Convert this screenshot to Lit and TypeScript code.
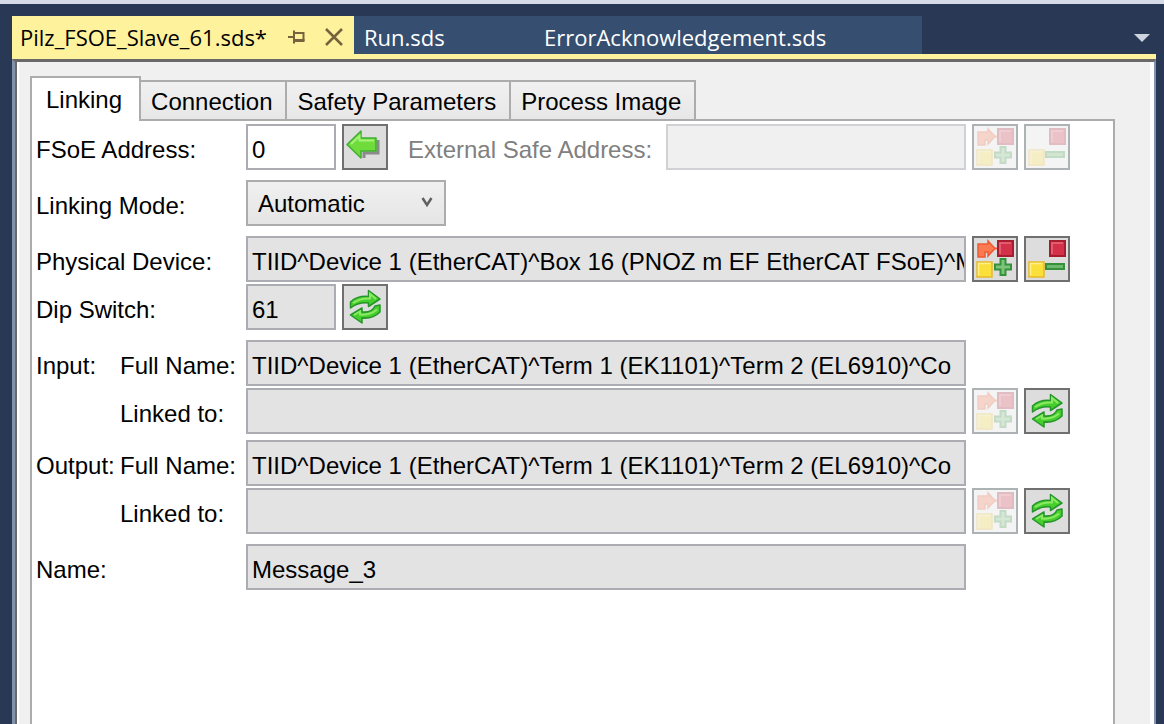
import { LitElement, html, css, svg, nothing } from "lit";
import { customElement, property, state } from "lit/decorators.js";

type IconName = "link" | "unlink" | "back" | "refresh";

const redSquare = svg`<rect x="26" y="5" width="15" height="15" fill="#d3304a" stroke="#a81c30" stroke-width="2"/><path d="M28 18V7h11" fill="none" stroke="#e76a7c" stroke-width="1.5"/>`;
const yellowSquare = svg`<rect x="5" y="26" width="15" height="15" fill="#fbe03c" stroke="#e8b928" stroke-width="1.5"/><path d="M6.500 39.500V27.500h12" fill="none" stroke="#fff08a" stroke-width="1.500"/>`;

const icons = {
  link: svg`
    <path d="M20 12.500h6" stroke="#f0623c" stroke-width="2"/>
    <path d="M6 21V8h10V5l7 7.500-7 7.500v-4h-3v5z" fill="#fb7a50" stroke="#ee5a34" stroke-width="1.5"/>
    ${redSquare}${yellowSquare}
    <path d="M28.500 23h5v5.500H39v5h-5.500V39h-5v-5.500H23v-5h5.500z" fill="#7cc47a" stroke="#36913c" stroke-width="2"/>`,
  unlink: svg`
    ${redSquare}${yellowSquare}
    <rect x="22" y="28" width="18" height="5" fill="#6fb96e" stroke="#36913c" stroke-width="2"/>`,
  back: svg`
    <path d="M36 16v13H22v5" fill="none" stroke="#777777" stroke-width="3" opacity="0.8"/>
    <path d="M5 20.500 19 7v7h15v13H19v7z" fill="#6fdc3c" stroke="#3fae30" stroke-width="1.500" stroke-linejoin="round"/>
    <path d="M9 20 17.500 12v4.500H32" fill="none" stroke="#a6f27c" stroke-width="2"/>`,
  refresh: svg`
    <path d="M8.500 24v-6q7-6.500 18-5.500V6.500l11.500 8.500-11.500 7.500V19q-10-1-18 5z" fill="#46cf2c" stroke="#25952a" stroke-width="1.5" stroke-linejoin="round"/>
    <path d="M11 19q7-5 17-4.500V10l6 5" fill="none" stroke="#8be966" stroke-width="2"/>
    <path d="M38 21v7q-7 7-18 6v5L8.500 31 20 24v4q10 1 13-6z" fill="#46cf2c" stroke="#25952a" stroke-width="1.5" stroke-linejoin="round"/>
    <path d="M12 31l6-3.500v3q10 1 17-5" fill="none" stroke="#8be966" stroke-width="2"/>`,
};

@customElement("icon-button")
class IconButton extends LitElement {
  @property() icon: IconName = "link";
  @property() label = "";
  @property({ type: Boolean }) disabled = false;

  static styles = css`
    :host { display: block; flex: none; }
    button {
      display: block;
      box-sizing: border-box;
      width: 46px;
      height: 46px;
      padding: 0;
      border: 2px solid #707070;
      background: #dddddd;
    }
    button:disabled { border-color: #adb2b5; background: #f4f4f4; }
    button:disabled svg { opacity: 0.25; }
    svg { display: block; width: 42px; height: 42px; }
  `;

  render() {
    return html`<button type="button" aria-label=${this.label} ?disabled=${this.disabled}>
      <svg viewBox="2 2 42 42" aria-hidden="true">${icons[this.icon]}</svg>
    </button>`;
  }
}

@customElement("app-root")
class AppRoot extends LitElement {
  @state() private activeTab = "Linking";

  static styles = css`
    :host {
      display: flex;
      flex-direction: column;
      box-sizing: border-box;
      height: 100vh;
      overflow: hidden;
      padding: 0 8px 0 12px;
      border-top: 4px solid #d6dce7;
      background: #293955;
      color: #000000;
      font: 24px/28px "Liberation Sans", Arial, sans-serif;
    }
    * { box-sizing: border-box; }
    button, input, select { font: inherit; color: inherit; margin: 0; border-radius: 0; }

    .documents {
      display: flex;
      flex: none;
      height: 55px;
      padding-top: 12px;
      border-bottom: 5px solid #fff29d;
      color: #ffffff;
      font: 22px/34px "Open Sans", "Noto Sans", sans-serif;
    }
    .document { display: flex; align-items: center; background: #364e6f; padding: 4px 10px 0; }
    .document.active { width: 342px; background: #fff29d; color: #000000; padding-left: 8px; gap: 18px; }
    .document.run { width: 180px; }
    .document.ack { width: 388px; }
    .document button { border: 0; padding: 0; background: none; white-space: nowrap; }
    .document .name { flex: 1; text-align: left; }
    .documents svg { display: block; }
    .more { margin-left: auto; border: 0; padding: 6px 6px 0 0; background: none; }

    .frame {
      flex: 1;
      display: flex;
      flex-direction: column;
      min-height: 0;
      padding: 14px 39px 0 15px;
      border-style: solid;
      border-width: 3px 2px 0 3px;
      border-color: #696969 #8391b0 #696969 #8391a8;
      box-shadow: inset 2px 0 #696969, inset 4px 0 #ffffff, inset -4px 0 #ffffff;
      background: #f0f0f0;
    }
    .tabs { display: flex; align-items: flex-end; flex: none; }
    .tab {
      height: 39px;
      padding: 2px 13px 0 10px;
      border: 2px solid #acacac;
      border-left-width: 0;
      border-bottom: 0;
      background: linear-gradient(#f1f1f1, #e7e7e7);
      white-space: nowrap;
    }
    .tab.active {
      height: 45px;
      padding: 0 17px 0 14px;
      margin-bottom: -2px;
      border-left-width: 2px;
      background: #ffffff;
      z-index: 1;
    }
    .pane {
      flex: 1;
      display: flex;
      flex-direction: column;
      gap: 10px;
      padding: 3px 43px 0 4px;
      border: 2px solid #acacac;
      border-bottom: 0;
      background: #ffffff;
    }

    .group { display: flex; flex-direction: column; gap: 2px; }
    .pair { display: flex; flex-direction: column; gap: 6px; }
    .row { display: grid; grid-template-columns: 84px 126px minmax(0, 1fr) 104px; }
    .row > label { white-space: nowrap; padding-top: 12px; }
    .wide { grid-column: 1 / 3; }
    .sub { grid-column: 2; }
    .controls { grid-column: 3; display: flex; gap: 6px; }
    .actions { grid-column: 4; display: flex; gap: 6px; padding-left: 6px; }
    input {
      flex: 1;
      min-width: 0;
      height: 46px;
      padding: 6px 0 0 4px;
      border: 2px solid #abadb3;
      background: #ffffff;
      outline: none;
    }
    input:read-only { background: #e3e3e3; }
    input:disabled { background: #f0f0f0; border-color: #d0d1d4; }
    input.short { flex: none; width: 90px; }
    .external { color: #808080; padding: 12px 8px 0 14px; white-space: nowrap; }
    .select { position: relative; width: 200px; height: 46px; }
    select {
      width: 100%;
      height: 100%;
      appearance: none;
      padding: 2px 30px 0 10px;
      border: 2px solid #acacac;
      background: linear-gradient(#f0f0f0, #e5e5e5);
    }
    .select svg { position: absolute; right: 13px; top: 16px; pointer-events: none; }
  `;

  private renderName(id: string, caption: string, value: string) {
    return html`<div class="row">
      <label for=${id}>${caption}</label>
      <label class="sub" for=${id}>Full Name:</label>
      <div class="controls"><input id=${id} readonly .value=${value} /></div>
    </div>`;
  }

  private renderLink(id: string) {
    return html`<div class="row">
      <label class="sub" for=${id}>Linked to:</label>
      <div class="controls"><input id=${id} readonly /></div>
      <div class="actions">
        <icon-button icon="link" label="Link" disabled></icon-button>
        <icon-button icon="refresh" label="Refresh"></icon-button>
      </div>
    </div>`;
  }

  private renderLinking() {
    const path = "TIID^Device 1 (EtherCAT)^Term 1 (EK1101)^Term 2 (EL6910)^Co";
    return html`
      <div class="row">
        <label class="wide" for="address">FSoE Address:</label>
        <div class="controls">
          <input id="address" class="short" .value=${"0"} />
          <icon-button icon="back" label="Apply address"></icon-button>
          <label class="external" for="external">External Safe Address:</label>
          <input id="external" disabled />
        </div>
        <div class="actions">
          <icon-button icon="link" label="Link" disabled></icon-button>
          <icon-button icon="unlink" label="Unlink" disabled></icon-button>
        </div>
      </div>
      <div class="row">
        <label class="wide" for="mode">Linking Mode:</label>
        <div class="controls">
          <div class="select">
            <select id="mode"><option>Automatic</option></select>
            <svg width="12" height="12" viewBox="0 0 12 12" aria-hidden="true"><path d="M1.500 2 6 9 10.500 2" fill="none" stroke="#606060" stroke-width="2.500"/></svg>
          </div>
        </div>
      </div>
      <div class="group">
        <div class="row">
          <label class="wide" for="device">Physical Device:</label>
          <div class="controls"><input id="device" readonly .value=${"TIID^Device 1 (EtherCAT)^Box 16 (PNOZ m EF EtherCAT FSoE)^M"} /></div>
          <div class="actions">
            <icon-button icon="link" label="Link"></icon-button>
            <icon-button icon="unlink" label="Unlink"></icon-button>
          </div>
        </div>
        <div class="row">
          <label class="wide" for="dip">Dip Switch:</label>
          <div class="controls">
            <input id="dip" class="short" readonly .value=${"61"} />
            <icon-button icon="refresh" label="Refresh"></icon-button>
          </div>
        </div>
      </div>
      <div class="pair">
        <div class="group">${this.renderName("input-name", "Input:", path)}${this.renderLink("input-link")}</div>
        <div class="group">${this.renderName("output-name", "Output:", path)}${this.renderLink("output-link")}</div>
      </div>
      <div class="row">
        <label class="wide" for="name">Name:</label>
        <div class="controls"><input id="name" readonly .value=${"Message_3"} /></div>
      </div>`;
  }

  render() {
    const tabs = ["Linking", "Connection", "Safety Parameters", "Process Image"];
    return html`
      <nav class="documents">
        <div class="document active">
          <button class="name" type="button">Pilz_FSOE_Slave_61.sds*</button>
          <button type="button" aria-label="Pin">
            <svg width="18" height="16" viewBox="0 0 18 16"><path d="M0 8h5M6 1.500v13M7 4h8.500v7.500M7 11h9.500" fill="none" stroke="#75633d" stroke-width="2"/><path d="M7 10h9.500v3H7z" fill="#75633d"/></svg>
          </button>
          <button type="button" aria-label="Close">
            <svg width="20" height="18" viewBox="0 0 20 18"><path d="M2 1l16 16M18 1 2 17" stroke="#75633d" stroke-width="2.500"/></svg>
          </button>
        </div>
        <div class="document run"><button type="button">Run.sds</button></div>
        <div class="document ack"><button type="button">ErrorAcknowledgement.sds</button></div>
        <button class="more" type="button" aria-label="Open documents">
          <svg width="16" height="8" viewBox="0 0 16 8"><path d="M0 0h16L8 8z" fill="#ced4dd"/></svg>
        </button>
      </nav>
      <main class="frame">
        <div class="tabs" role="tablist">
          ${tabs.map((tab) => html`<button type="button" role="tab"
            class="tab ${tab === this.activeTab ? "active" : ""}"
            aria-selected=${tab === this.activeTab}
            @click=${() => (this.activeTab = tab)}>${tab}</button>`)}
        </div>
        <section class="pane" role="tabpanel">
          ${this.activeTab === "Linking" ? this.renderLinking() : nothing}
        </section>
      </main>`;
  }
}
